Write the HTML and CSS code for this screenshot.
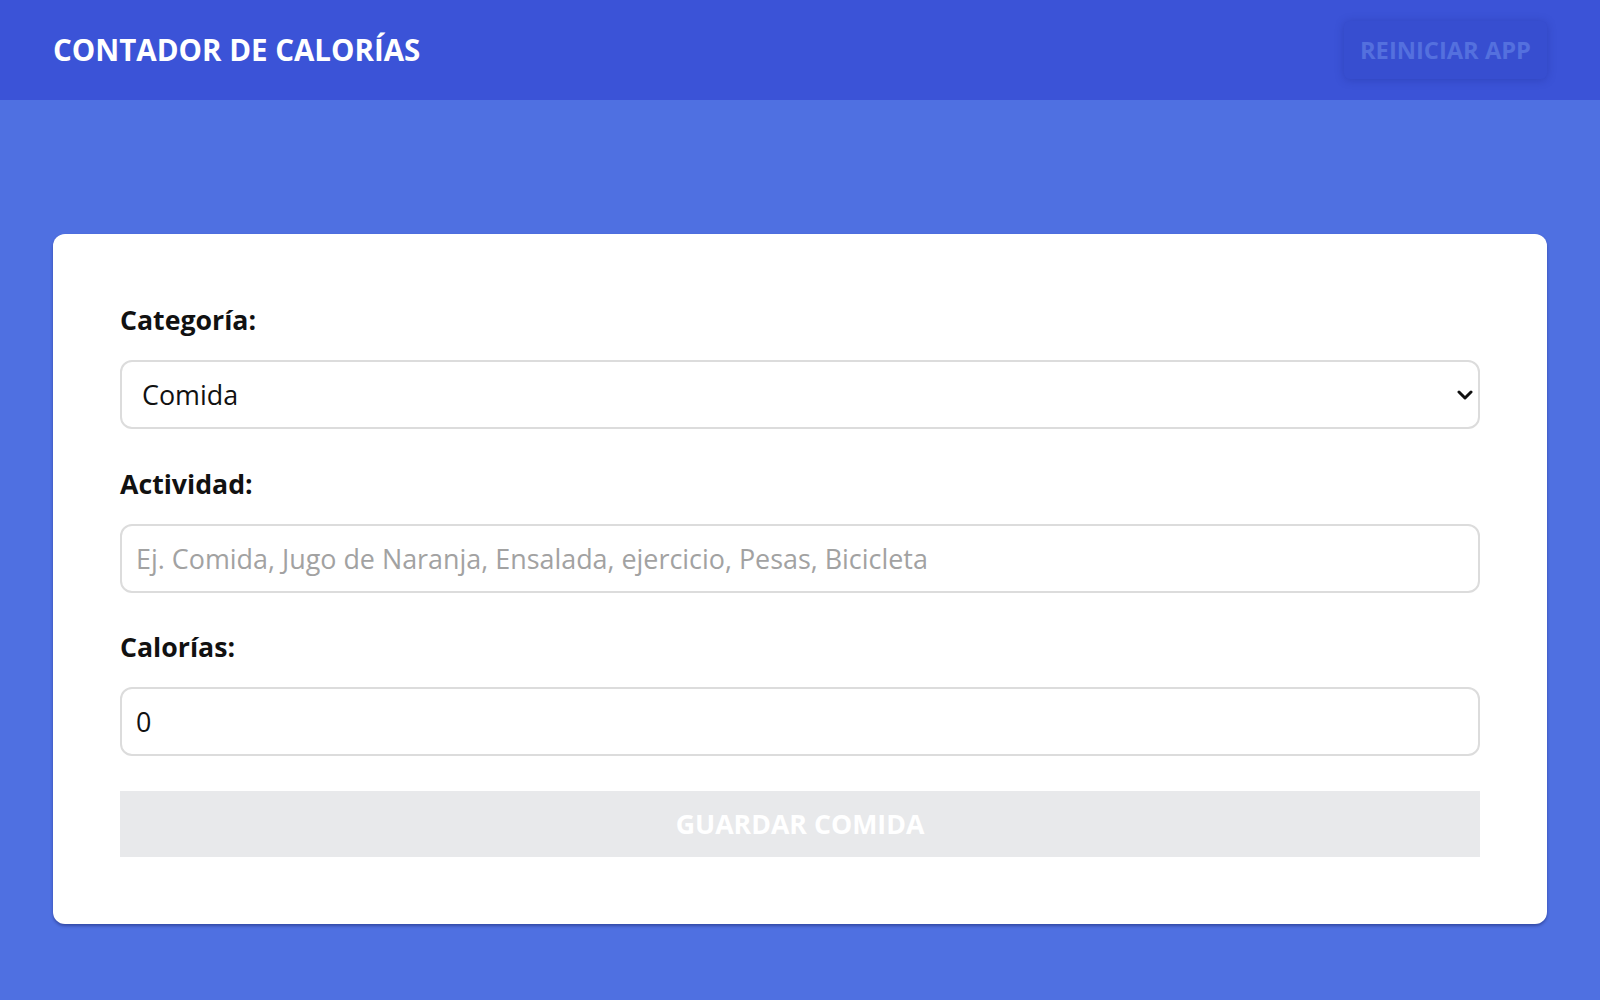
FILE: index.html
```html
<!DOCTYPE html>
<html lang="es">
<head>
<meta charset="utf-8">
<title>Contador de Calorías</title>
<link rel="stylesheet" href="styles.css">
</head>
<body>
<header class="header">
  <div class="header-inner">
    <h1 class="title">Contador de Calorías</h1>
    <button class="reset-btn" disabled>Reiniciar App</button>
  </div>
</header>
<main class="main">
  <form class="card">
    <div class="field">
      <label class="label" for="category">Categoría:</label>
      <div class="select-wrap">
        <select id="category" class="control select">
          <option>Comida</option>
          <option>Ejercicio</option>
        </select>
        <svg class="chevron" viewBox="0 0 16 10" width="16" height="10" aria-hidden="true">
          <path d="M2 2 L8 8 L14 2" fill="none" stroke="#111" stroke-width="3" stroke-linecap="round" stroke-linejoin="round"/>
        </svg>
      </div>
    </div>
    <div class="field">
      <label class="label" for="name">Actividad:</label>
      <input id="name" class="control" type="text" placeholder="Ej. Comida, Jugo de Naranja, Ensalada, ejercicio, Pesas, Bicicleta">
    </div>
    <div class="field">
      <label class="label" for="calories">Calorías:</label>
      <input id="calories" class="control" type="number" value="0">
    </div>
    <button type="submit" class="save-btn" disabled>Guardar Comida</button>
  </form>
</main>
</body>
</html>
```
FILE: styles.css
```css
* { box-sizing: border-box; }
html, body { margin: 0; padding: 0; }
body {
  font-family: "Open Sans", "Noto Sans", sans-serif;
  background: #4f70e1;
  min-height: 100vh;
  color: #111;
}
.header {
  background: #3b53d7;
  padding: 20px 0;
}
.header-inner {
  max-width: 1494px;
  margin: 0 auto;
  display: flex;
  align-items: center;
  justify-content: space-between;
  height: 60px;
}
.title {
  margin: 0;
  color: #fff;
  font-size: 29.5px;
  font-weight: 700;
  text-transform: uppercase;
  line-height: 1;
}
.reset-btn {
  font-family: inherit;
  font-size: 23.7px;
  font-weight: 700;
  text-transform: uppercase;
  color: #5470de;
  background: #374ed0;
  border: none;
  border-radius: 6px;
  padding: 0 16px;
  height: 58px;
  box-shadow: 0 1px 8px rgba(30, 40, 140, 0.35);
  cursor: default;
}
.main {
  padding: 134px 0 60px;
}
.card {
  max-width: 1494px;
  margin: 0 auto;
  background: #fff;
  border-radius: 12px;
  padding: 66px 67px 67px;
  box-shadow: 0 2px 3px rgba(20, 30, 100, 0.45);
  display: flex;
  flex-direction: column;
  gap: 34.5px;
}
.field {
  display: flex;
  flex-direction: column;
  gap: 20px;
}
.label {
  font-size: 26.7px;
  font-weight: 700;
  line-height: 40px;
  color: #111;
}
.control {
  width: 100%;
  height: 69px;
  font-family: inherit;
  font-size: 26.9px;
  line-height: 40px;
  color: #111;
  background: #fff;
  border: 2px solid #dcdcdc;
  border-radius: 12px;
  padding: 0 14px;
  outline: none;
}
.control::placeholder { color: #a2a2a2; }
.control[type=number] { -moz-appearance: textfield; }
.control::-webkit-outer-spin-button,
.control::-webkit-inner-spin-button { -webkit-appearance: none; margin: 0; }
.select-wrap { position: relative; }
.select {
  appearance: none;
  -webkit-appearance: none;
  padding-left: 20px;
}
.chevron {
  position: absolute;
  right: 7px;
  top: 30px;
  pointer-events: none;
}
.save-btn {
  font-family: inherit;
  font-size: 26.7px;
  font-weight: 700;
  text-transform: uppercase;
  color: #fff;
  background: #e8e9eb;
  border: none;
  height: 66px;
  width: 100%;
  cursor: default;
}
```
